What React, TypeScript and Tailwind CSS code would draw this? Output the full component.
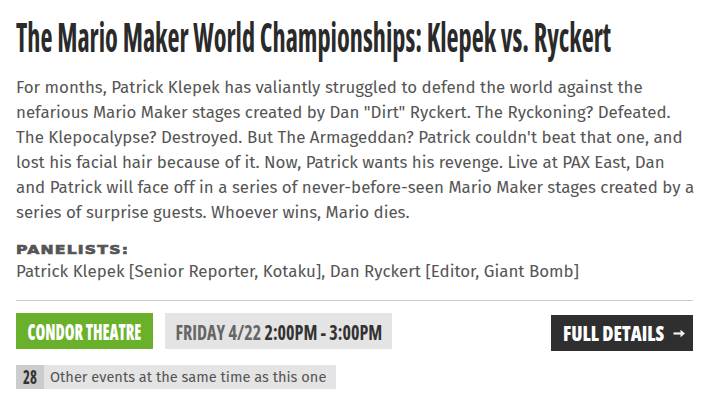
import React, { useLayoutEffect, useRef, useState } from "react";

function Fit({ w, className, children }: { w: number; className: string; children: React.ReactNode }) {
  const ref = useRef<HTMLSpanElement>(null);
  const [s, setS] = useState(1);
  useLayoutEffect(() => {
    const measure = () => {
      if (ref.current && ref.current.offsetWidth > 0) setS(w / ref.current.offsetWidth);
    };
    measure();
    document.fonts?.ready.then(measure);
  }, [w]);
  return (
    <span ref={ref} className={"inline-block shrink-0 whitespace-nowrap " + className} style={{ transform: `scaleX(${s})` }}>
      {children}
    </span>
  );
}

const gothic = "font-['Open_Sans',sans-serif] [font-stretch:75%]";

export default function App() {
  return (
    <div className="w-[713px] h-[412px] overflow-hidden bg-white">
      <div className="pl-4 pr-5 pt-3">
        <h1 className={`h-12 leading-[48px] text-[41px] font-bold text-[#2a2a2a] ${gothic}`}>
          <Fit w={595} className="origin-left">The Mario Maker World Championships: Klepek vs. Ryckert</Fit>
        </h1>

        <p className="mt-[15px] whitespace-nowrap font-['Fira_Sans','Noto_Sans',sans-serif] text-[16.9px] leading-[25px] text-[#555555]">
          For months, Patrick Klepek has valiantly struggled to defend the world against the
          <br />
          nefarious Mario Maker stages created by Dan "Dirt" Ryckert. The Ryckoning? Defeated.
          <br />
          The Klepocalypse? Destroyed. But The Armageddan? Patrick couldn't beat that one, and
          <br />
          lost his facial hair because of it. Now, Patrick wants his revenge. Live at PAX East, Dan
          <br />
          and Patrick will face off in a series of never-before-seen Mario Maker stages created by a
          <br />
          series of surprise guests. Whoever wins, Mario dies.
        </p>

        <div className="mt-[17px] h-[17px] font-['DejaVu_Sans',sans-serif] text-[13px] leading-4 font-bold tracking-[1px] text-[#555555] [-webkit-text-stroke:0.7px_#555555]">
          <Fit w={113} className="origin-left">PANELISTS:</Fit>
        </div>
        <div className="whitespace-nowrap font-['Fira_Sans','Noto_Sans',sans-serif] text-[16.9px] leading-[25px] text-[#555555]">
          Patrick Klepek [Senior Reporter, Kotaku], Dan Ryckert [Editor, Giant Bomb]
        </div>

        <div className="mt-4 h-px bg-[#cccccc]" />

        <div className="mt-3 flex items-start">
          <div className={`flex h-9 w-[137px] items-center justify-center bg-[#69b12a] text-[23px] leading-none font-extrabold text-white ${gothic}`}>
            <Fit w={114} className="origin-center">CONDOR THEATRE</Fit>
          </div>
          <div className={`ml-3 flex h-9 w-[227px] items-center justify-center bg-[#e4e4e4] text-[22px] leading-none font-bold ${gothic}`}>
            <Fit w={207} className="origin-center">
              <span className="text-[#666666]">FRIDAY 4/22</span> <span className="text-[#333333]">2:00PM - 3:00PM</span>
            </Fit>
          </div>
          <div className="flex-1" />
          <a className={`mt-[2px] flex h-9 w-[142px] items-center bg-[#2f2f2f] pl-3 text-[21px] leading-none font-extrabold text-white ${gothic}`}>
            <span className="flex w-[101px] justify-center">
              <Fit w={101} className="origin-center">FULL DETAILS</Fit>
            </span>
            <svg className="ml-[9px]" width="13" height="9" viewBox="0 0 13 9">
              <path d="M0.5 4.5 H10" stroke="#f2f2f2" strokeWidth="2.2" />
              <path d="M7.5 0.8 L12 4.5 L7.5 8.2 Z" fill="#f2f2f2" />
            </svg>
          </a>
        </div>

        <div className="mt-[14px] flex h-6">
          <div className={`flex w-7 items-center justify-center bg-[#cccccc] text-[19px] leading-none font-bold text-[#333333] ${gothic}`}>
            <Fit w={14} className="origin-center">28</Fit>
          </div>
          <div className="flex w-[292px] items-center bg-[#e4e4e4] pl-[6px] font-['Fira_Sans','Noto_Sans',sans-serif] text-[14.6px] leading-none text-[#555555]">
            Other events at the same time as this one
          </div>
        </div>
      </div>
    </div>
  );
}
